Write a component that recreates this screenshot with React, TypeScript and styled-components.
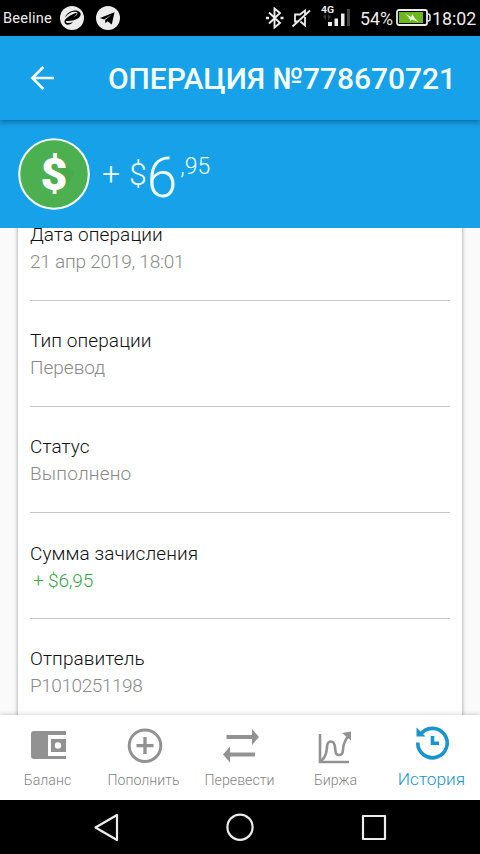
import React from 'react';
import styled, { createGlobalStyle } from 'styled-components';

const GlobalStyle = createGlobalStyle`
  * { box-sizing: border-box; }
  body { margin: 0; background: #000; }
`;

const Screen = styled.div`
  width: 480px;
  height: 854px;
  display: flex;
  flex-direction: column;
  overflow: hidden;
  background: #fafafa;
  font-family: Roboto, "Liberation Sans", sans-serif;
  white-space: nowrap;
  svg { display: block; flex: none; }
`;

const StatusBar = styled.header`
  height: 36px;
  flex: none;
  display: flex;
  align-items: center;
  padding: 0 3px;
  background: #000;
  color: #ececec;
`;

const Carrier = styled.span`
  width: 57px;
  font-size: 14.6px;
  line-height: 20px;
  letter-spacing: 0.2px;
`;

const StatusIcons = styled.div<{ $gap: number }>`
  display: flex;
  align-items: center;
  gap: ${(p) => p.$gap}px;
`;

const StatusRight = styled.div`
  margin-left: auto;
  display: flex;
  align-items: center;
`;

const SignalGroup = styled.div`
  display: flex;
  margin: 0 9px 0 9px;
`;

const StatusText = styled.span<{ $width: number }>`
  width: ${(p) => p.$width}px;
  font-size: 17.8px;
  line-height: 20px;
  padding-top: 2px;
`;

const SignalLabel = styled.text`
  font-size: 9.5px;
  font-weight: 700;
  fill: #ececec;
`;

const AppBar = styled.div`
  height: 84px;
  flex: none;
  display: flex;
  align-items: center;
  gap: 53px;
  padding-left: 29px;
  background: #17a1e8;
  color: #f4ffff;
  box-shadow: 0 2px 5px rgba(0, 50, 90, 0.5);
  z-index: 1;
`;

const Title = styled.h1`
  margin: 0;
  padding-top: 1px;
  font-size: 30px;
  line-height: 36px;
  font-weight: 500;
  letter-spacing: -0.07px;
`;

const Summary = styled.section`
  height: 108px;
  flex: none;
  display: flex;
  align-items: center;
  padding-left: 18px;
  gap: 12px;
  background: #17a1e8;
  color: #f0ffff;
`;

const Amount = styled.div`
  display: flex;
  height: 72px;
  font-weight: 300;
`;

const AmountPart = styled.span<{ $size: number; $top: number; $left?: number }>`
  font-size: ${(p) => p.$size}px;
  line-height: 1;
  padding-top: ${(p) => p.$top}px;
  margin-left: ${(p) => p.$left ?? 0}px;
`;

const Content = styled.main`
  flex: 1;
  min-height: 0;
  overflow: hidden;
  padding: 0 18px;
`;

const Card = styled.div`
  margin-top: -33px;
  padding: 0 12px;
  background: #fff;
  box-shadow: 0 1px 4px rgba(0, 0, 0, 0.42);
`;

const Row = styled.div<{ $drop?: boolean }>`
  height: 106px;
  padding-top: ${(p) => (p.$drop ? 27 : 26)}px;
  border-bottom: 1px solid #c8c8c8;
  font-size: 19px;
  line-height: 27px;
`;

const Label = styled.div`
  color: #111;
  font-weight: 350;
  letter-spacing: 0.1px;
`;

const Value = styled.div<{ $credit?: boolean; $tracking: number }>`
  font-weight: 300;
  color: ${(p) => (p.$credit ? '#35a846' : '#8a8a8a')};
  padding-left: ${(p) => (p.$credit ? 3 : 0)}px;
  letter-spacing: ${(p) => p.$tracking}px;
`;

const TabBar = styled.nav`
  height: 85px;
  flex: none;
  display: grid;
  grid-template-columns: repeat(5, 96px);
  background: #fff;
  box-shadow: 0 -1px 4px rgba(0, 0, 0, 0.16);
  z-index: 1;
`;

const Tab = styled.div<{ $active?: boolean }>`
  display: flex;
  flex-direction: column;
  align-items: center;
  padding: ${(p) => (p.$active ? '8px 1px 0 0' : '11px 1px 0 0')};
  gap: 6px;
  color: ${(p) => (p.$active ? '#1795cd' : '#858585')};
  font-size: ${(p) => (p.$active ? 17.3 : 14.2)}px;
  line-height: 20px;
  font-weight: ${(p) => (p.$active ? 350 : 300)};
`;

const SystemNav = styled.footer`
  height: 54px;
  flex: none;
  display: flex;
  align-items: center;
  justify-content: center;
  gap: 102px;
  padding: 0 1px 0 0;
  background: #000;
`;

const WalletAppIcon = () => (
  <svg width="24" height="24" viewBox="0 0 24 24">
    <circle cx="12" cy="12" r="12" fill="#ececec" />
    <path fillRule="evenodd" d="M5 11.500C7 6 14 3.500 18 5c5 2 3 7.500-5 9.500-5 1-8-.5-7 1.500 1 1.500 4 1 7 0-3 3.500-8 3.500-8.500 0-.2-1.500 1-3.500 3.500-5 3-2 7-4 8.500-4 1 .5-1 3-4 4.500 5-1.500 6-5 4-5.500-4-1-8 1-11.500 5.500Z" fill="#000" />
  </svg>
);

const TelegramIcon = () => (
  <svg width="24" height="24" viewBox="0 0 24 24">
    <circle cx="12" cy="12" r="12" fill="#ececec" />
    <path d="M4 12 18.500 6.200 15.800 18.500 11.600 15.300 9.400 17.300 9.100 13.900 15.500 8.800 8.100 13.400Z" fill="#000" />
  </svg>
);

const BluetoothIcon = () => (
  <svg width="20" height="22" viewBox="0 0 20 22" fill="none" stroke="#ececec" strokeWidth="1.900">
    <path d="m4 5.500 11 10.500-5.500 4.500V1.500L15 6 4 16.500" />
    <path d="M1 11h3M15.500 11h3" strokeWidth="2.600" />
  </svg>
);

const MuteIcon = () => (
  <svg width="21" height="20" viewBox="0 0 21 20" fill="none" stroke="#ececec" strokeWidth="1.800">
    <path d="M14 6.500V2.500L9 6.500H4v7H7M9.500 13.500l4.500 4V9M1.500 18.500l17.500-16" />
  </svg>
);

const SignalIcon = () => (
  <svg width="30" height="26" viewBox="0 0 30 26">
    <SignalLabel x="0" y="7.500" textLength="13" lengthAdjust="spacingAndGlyphs">4G</SignalLabel>
    <path d="m2 12 3-3v6Zm8 0-3-3v6Z" fill="#353535" />
    <path d="M7 17h4v4H7Zm6.500-3.500h3.500V21h-3.500ZM20 8.500h3.500V21H20Z" fill="#ececec" />
    <path d="M26 4h3v17h-3Z" fill="#444" />
  </svg>
);

const BatteryIcon = () => (
  <svg width="36" height="18" viewBox="0 0 36 18">
    <rect x="1" y="1" width="30" height="15" rx="2" fill="#000" stroke="#ececec" strokeWidth="1.800" />
    <rect x="3" y="3" width="24" height="11" fill="#6bb71e" />
    <path d="M32 5q2 0 2 2v3q0 2-2 2" fill="none" stroke="#ececec" strokeWidth="1.500" />
    <path d="m9 4.500 6 3.500 1.500-3 2 4 4 4-6.500-2.500L14.500 12l-2-4Z" fill="#efffe0" />
  </svg>
);

const BackIcon = () => (
  <svg width="26" height="26" viewBox="0 0 26 26" fill="none" stroke="#f4ffff" strokeWidth="2.600">
    <path d="M25 13H3M14.300 2 3.300 13l11 11" />
  </svg>
);

const CoinSign = styled.text`
  font-size: 44px;
  font-weight: 900;
  fill: #fff;
`;

const CoinIcon = () => (
  <svg width="72" height="72" viewBox="0 0 72 72">
    <circle cx="36" cy="36" r="34.800" fill="#4caf50" stroke="#f1fff6" strokeWidth="2.100" />
    <path d="m46 24 11 11-10 14-13 4Z" fill="#49a949" />
    <CoinSign x="36" y="51.500" textAnchor="middle" textLength="27" lengthAdjust="spacingAndGlyphs">$</CoinSign>
  </svg>
);

const BalanceIcon = () => (
  <svg width="36" height="38" viewBox="0 0 36 38" fill="#929292">
    <path d="M4 5h32v4H18v21h18v3H4q-3 0-3-3V8q0-3 3-3Z" />
    <path fillRule="evenodd" d="M21 13h15v13H21ZM28 16.300a3.200 3.200 0 1 0 0 6.400 3.200 3.200 0 0 0 0-6.400Z" />
  </svg>
);

const TopUpIcon = () => (
  <svg width="38" height="38" viewBox="0 0 38 38" fill="none" stroke="#929292">
    <circle cx="20" cy="19.700" r="15.800" strokeWidth="3" />
    <path d="M20 11v17M11.500 19.700h17" strokeWidth="3.300" />
  </svg>
);

const TransferIcon = () => (
  <svg width="38" height="38" viewBox="0 0 38 38" fill="#929292">
    <path d="M5.500 9H31V3l7 8-7 8v-6H5.500ZM9 26.500h25v4H9v6L2 28.500l7-8Z" />
  </svg>
);

const ExchangeIcon = () => (
  <svg width="38" height="38" viewBox="0 0 38 38" fill="none" stroke="#929292" strokeWidth="2.600">
    <path d="M3 8v28H32" />
    <path d="M4 35C9 31 9.500 26 10 21c.4-7 7-7.500 8 0 .7 6 .5 8 4 8 5.500 0 3-6 5-11 1-3 2-5 4-8" />
    <path d="m25 7 9-1.500v9Z" fill="#929292" stroke="none" />
  </svg>
);

const HistoryIcon = () => (
  <svg width="38" height="40" viewBox="0 0 38 40" fill="none" stroke="#1795cd" strokeWidth="3.600">
    <path d="M7.200 12A14.700 14.700 0 1 1 4.800 19.500" />
    <path d="M3.500 4.500v9h9Z" fill="#1795cd" stroke="none" />
    <path d="M19.500 13v7.300H26" />
  </svg>
);

const operationRows = [
  { label: 'Дата операции', value: '21 апр 2019, 18:01', tracking: -0.22 },
  { label: 'Тип операции', value: 'Перевод', tracking: 0 },
  { label: 'Статус', value: 'Выполнено', tracking: 0.2 },
  { label: 'Сумма зачисления', value: '+ $6,95', tracking: -0.15, credit: true },
  { label: 'Отправитель', value: 'P1010251198', tracking: -0.44 },
];

const tabs = [
  { label: 'Баланс', icon: <BalanceIcon /> },
  { label: 'Пополнить', icon: <TopUpIcon /> },
  { label: 'Перевести', icon: <TransferIcon /> },
  { label: 'Биржа', icon: <ExchangeIcon /> },
  { label: 'История', icon: <HistoryIcon />, active: true },
];

export default function App() {
  return (
    <Screen>
      <GlobalStyle />
      <StatusBar>
        <Carrier>Beeline</Carrier>
        <StatusIcons $gap={12}>
          <WalletAppIcon />
          <TelegramIcon />
        </StatusIcons>
        <StatusRight>
          <StatusIcons $gap={6}>
            <BluetoothIcon />
            <MuteIcon />
          </StatusIcons>
          <SignalGroup>
            <SignalIcon />
          </SignalGroup>
          <StatusText $width={36}>54%</StatusText>
          <BatteryIcon />
          <StatusText $width={45}>18:02</StatusText>
        </StatusRight>
      </StatusBar>
      <AppBar>
        <BackIcon />
        <Title>ОПЕРАЦИЯ №778670721</Title>
      </AppBar>
      <Summary>
        <CoinIcon />
        <Amount>
          <AmountPart $size={32} $top={20}>+</AmountPart>
          <AmountPart $size={32} $top={20} $left={9}>$</AmountPart>
          <AmountPart $size={55} $top={13}>6</AmountPart>
          <AmountPart $size={23} $top={17} $left={3}>,95</AmountPart>
        </Amount>
      </Summary>
      <Content>
        <Card>
          {operationRows.map((row) => (
            <Row key={row.label} $drop={row.credit}>
              <Label>{row.label}</Label>
              <Value $credit={row.credit} $tracking={row.tracking}>{row.value}</Value>
            </Row>
          ))}
        </Card>
      </Content>
      <TabBar>
        {tabs.map((tab) => (
          <Tab key={tab.label} $active={tab.active}>
            {tab.icon}
            <span>{tab.label}</span>
          </Tab>
        ))}
      </TabBar>
      <SystemNav>
        <svg width="32" height="32" viewBox="0 0 32 32" fill="none" stroke="#ececec" strokeWidth="2.200" strokeLinejoin="round">
          <path d="M27 4v25L5.500 16.500Z" />
        </svg>
        <svg width="32" height="32" viewBox="0 0 32 32" fill="none" stroke="#ececec" strokeWidth="2.200">
          <circle cx="16" cy="16.200" r="12.600" />
        </svg>
        <svg width="32" height="32" viewBox="0 0 32 32" fill="none" stroke="#ececec" strokeWidth="2.200" strokeLinejoin="round">
          <path d="M5 5h22v23H5Z" />
        </svg>
      </SystemNav>
    </Screen>
  );
}
